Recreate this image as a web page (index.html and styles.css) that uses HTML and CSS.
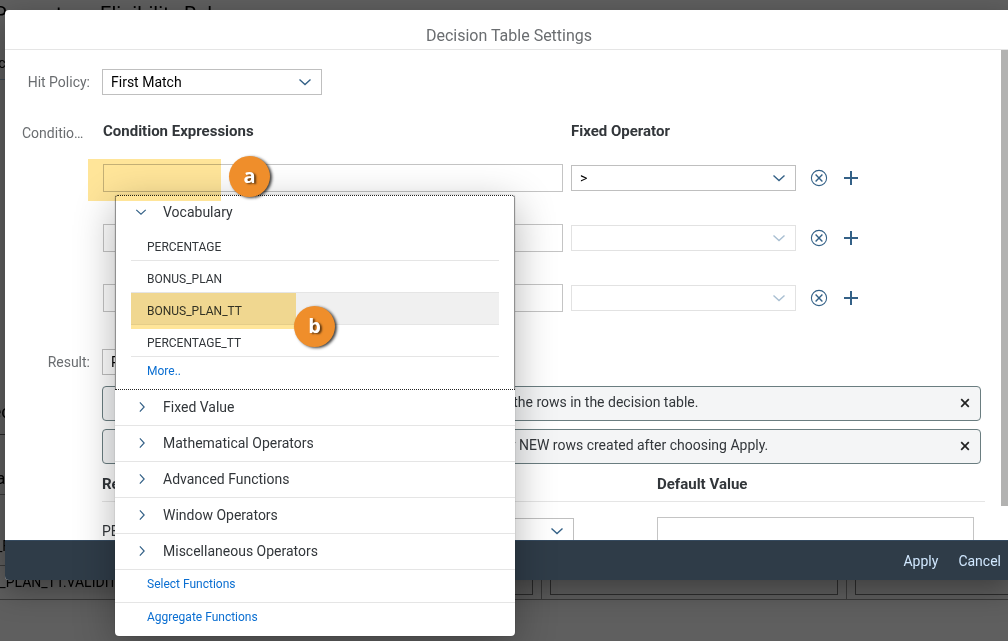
FILE: index.html
```html
<!DOCTYPE html>
<html lang="en">
<head>
<meta charset="utf-8">
<title>Decision Table Settings</title>
<link rel="stylesheet" href="styles.css">
</head>
<body>
<svg class="sprite" aria-hidden="true">
  <symbol id="chevron" viewBox="0 0 14 14"><path d="M1.5 4.5 7 9.5l5.5-5" fill="none" stroke="currentColor" stroke-width="1.4"/></symbol>
  <symbol id="decline" viewBox="0 0 18 18"><circle cx="9" cy="9" r="7.6" fill="none" stroke="currentColor" stroke-width="1.1"/><path d="m5.6 5.6 6.8 6.8m0-6.8-6.8 6.8" stroke="currentColor" stroke-width="1.4"/></symbol>
  <symbol id="add" viewBox="0 0 16 16"><path d="M8 1v14M1 8h14" stroke="currentColor" stroke-width="2"/></symbol>
  <symbol id="close" viewBox="0 0 10 10"><path d="m1.2 1.2 7.6 7.6m0-7.6-7.6 7.6" stroke="currentColor" stroke-width="1.7"/></symbol>
</svg>

<div class="page" aria-hidden="true">
  <h1 class="page-title">Percentage Eligibility Rules</h1>
  <p class="page-tab">Doc</p>
  <h2 class="page-section">Decision</h2>
  <p class="page-label">Data</p>
  <p class="page-head">N_FILTER</p>
  <div class="page-row">
    <span class="page-cell">S_PLAN_TT.VALIDITY</span>
    <span class="page-cell"><i class="page-box"></i></span>
    <span class="page-cell"><i class="page-box"></i></span>
    <span class="page-cell"><i class="page-box"></i></span>
  </div>
</div>
<div class="shade"></div>

<section class="dialog" role="dialog" aria-labelledby="dialog-title">
  <header class="dialog-header"><h2 id="dialog-title">Decision Table Settings</h2></header>
  <div class="dialog-body">
    <div class="form">
      <label class="form-label" for="hit">Hit Policy:</label>
      <div class="picker picker-policy">
        <select id="hit"><option>First Match</option></select>
        <svg class="arrow"><use href="#chevron"/></svg>
      </div>

      <span class="form-label form-label-start">Condition Expressions:</span>
      <div class="conditions">
        <h3>Condition Expressions</h3>
        <h3 class="wide">Fixed Operator</h3>

        <input type="text" aria-label="Condition 1">
        <div class="picker">
          <select aria-label="Operator 1"><option>&gt;</option></select>
          <svg class="arrow"><use href="#chevron"/></svg>
        </div>
        <div class="actions">
          <button type="button" aria-label="Remove"><svg class="icon-lg"><use href="#decline"/></svg></button>
          <button type="button" aria-label="Add"><svg class="icon-md"><use href="#add"/></svg></button>
        </div>

        <input type="text" aria-label="Condition 2">
        <div class="picker off">
          <select aria-label="Operator 2" disabled><option></option></select>
          <svg class="arrow"><use href="#chevron"/></svg>
        </div>
        <div class="actions">
          <button type="button" aria-label="Remove"><svg class="icon-lg"><use href="#decline"/></svg></button>
          <button type="button" aria-label="Add"><svg class="icon-md"><use href="#add"/></svg></button>
        </div>

        <input type="text" aria-label="Condition 3">
        <div class="picker off">
          <select aria-label="Operator 3" disabled><option></option></select>
          <svg class="arrow"><use href="#chevron"/></svg>
        </div>
        <div class="actions">
          <button type="button" aria-label="Remove"><svg class="icon-lg"><use href="#decline"/></svg></button>
          <button type="button" aria-label="Add"><svg class="icon-md"><use href="#add"/></svg></button>
        </div>
      </div>

      <label class="form-label form-label-result" for="result">Result:</label>
      <div class="result">
        <div class="picker picker-policy">
          <select id="result"><option>PERCENTAGE</option></select>
          <svg class="arrow"><use href="#chevron"/></svg>
        </div>
        <div class="message">
          <p>Changes made to access of a result columns will apply to all the rows in the decision table.</p>
          <button type="button" aria-label="Close"><svg class="icon-sm"><use href="#close"/></svg></button>
        </div>
        <div class="message">
          <p>Change made to the default value of a result will apply to only NEW rows created after choosing Apply.</p>
          <button type="button" aria-label="Close"><svg class="icon-sm"><use href="#close"/></svg></button>
        </div>
        <table class="results">
          <thead><tr><th class="col-name">Result</th><th class="col-access">Access</th><th>Default Value</th></tr></thead>
          <tbody><tr>
            <td>PERCENTAGE</td>
            <td><div class="picker"><select aria-label="Access"><option>Editable</option></select><svg class="arrow"><use href="#chevron"/></svg></div></td>
            <td class="cell-value"><input type="text" aria-label="Default value"></td>
          </tr></tbody>
        </table>
      </div>
    </div>
    <div class="track"><div class="thumb"></div></div>
  </div>
  <footer class="dialog-footer">
    <button type="button">Apply</button>
    <button type="button">Cancel</button>
  </footer>
</section>

<nav class="popover" aria-label="Expression suggestions">
  <div class="group">
    <button type="button" class="entry entry-open"><svg class="caret"><use href="#chevron"/></svg>Vocabulary</button>
    <ul class="words">
      <li>PERCENTAGE</li>
      <li>BONUS_PLAN</li>
      <li class="current">BONUS_PLAN_TT</li>
      <li>PERCENTAGE_TT</li>
    </ul>
    <a class="more" href="#more">More..</a>
  </div>
  <button type="button" class="entry"><svg class="caret shut"><use href="#chevron"/></svg>Fixed Value</button>
  <button type="button" class="entry"><svg class="caret shut"><use href="#chevron"/></svg>Mathematical Operators</button>
  <button type="button" class="entry"><svg class="caret shut"><use href="#chevron"/></svg>Advanced Functions</button>
  <button type="button" class="entry"><svg class="caret shut"><use href="#chevron"/></svg>Window Operators</button>
  <button type="button" class="entry"><svg class="caret shut"><use href="#chevron"/></svg>Miscellaneous Operators</button>
  <a class="function" href="#select">Select Functions</a>
  <a class="function" href="#aggregate">Aggregate Functions</a>
</nav>

<div class="highlight highlight-a"></div>
<div class="highlight highlight-b"></div>
<span class="marker marker-a">a</span>
<span class="marker marker-b">b</span>
</body>
</html>
```
FILE: styles.css
```css
* { box-sizing: border-box; }
html, body { height: 100%; }
body {
  margin: 0;
  overflow: hidden;
  position: relative;
  background: #fafafa;
  color: #32363a;
  font: 14px/20px Roboto, "Open Sans", sans-serif;
}
h1, h2, h3, p, ul { margin: 0; padding: 0; font-weight: 400; }
ul { list-style: none; }
button, input, select { font: inherit; color: inherit; margin: 0; border-radius: 0; }
button { border: 0; padding: 0; background: none; cursor: pointer; }
a { color: #0a6ed1; text-decoration: none; }
.sprite { position: absolute; width: 0; height: 0; }

/* Page under the dialog */
.page { margin-left: -20px; overflow: hidden; color: #000; white-space: nowrap; }
.page-title { padding: 4px 0 0 14px; font-size: 20px; line-height: 20px; }
.page-tab { height: 56px; padding: 29px 0 0 1px; border-bottom: 1px solid #a9c6de; }
.page-section { height: 355px; padding: 322px 0 0 0; font-size: 18px; border-bottom: 1px solid #666; }
.page-label { height: 60px; padding: 34px 0 0 6px; font-size: 16px; border-bottom: 1px solid #999; }
.page-head { height: 71px; padding: 41px 0 0 6px; border-bottom: 1px solid #999; }
.page-row { display: grid; grid-template-columns: 257px 305px 305px 305px; height: 34px; border-bottom: 1px solid #999; }
.page-cell { padding: 5px 8px; border-right: 1px solid #999; }
.page-cell:first-child { padding: 6px 0 0 11px; }
.page-box { display: block; height: 24px; border: 1px solid #777; }
.shade { position: absolute; inset: 0; background: rgba(0, 0, 0, .62); }

/* Dialog */
.dialog {
  position: absolute;
  inset: 10px -5px 61px 5px;
  display: flex;
  flex-direction: column;
  overflow: hidden;
  background: #fff;
  border-radius: 4px;
  box-shadow: 0 10px 30px rgba(0, 0, 0, .35);
}
.dialog-header { height: 40px; border-bottom: 1px solid #e5e5e5; text-align: center; }
.dialog-header h2 { font-size: 16px; line-height: 52px; color: #6a6d70; }
.dialog-body { flex: 1; min-height: 0; display: flex; overflow: hidden; }
.track { flex: 0 0 12px; }
.thumb { height: 93%; background: #b2b2b1; }
.dialog-footer {
  height: 40px;
  display: flex;
  align-items: center;
  justify-content: flex-end;
  gap: 20px;
  padding-right: 12px;
  background: #2f3c48;
  border-top: 1px solid #354a5f;
  color: #d1e8ff;
}

/* Form */
.form {
  flex: 1;
  min-width: 0;
  display: grid;
  grid-template-columns: 68px minmax(0, 1fr);
  column-gap: 12px;
  align-content: start;
  padding: 19px 16px 0 17px;
}
.form-label {
  height: 26px;
  line-height: 26px;
  text-align: right;
  white-space: nowrap;
  color: #6a6d70;
}
.form-label-start { margin-top: 25px; text-align: left; overflow: hidden; text-overflow: ellipsis; }
.picker { display: grid; align-items: center; }
.picker-policy { width: 220px; }
.picker select, .picker .arrow { grid-area: 1 / 1; }
.picker select {
  appearance: none;
  width: 100%;
  height: 26px;
  padding: 0 8px;
  border: 1px solid #bfbfbf;
  background: #fff;
  color: #000;
  opacity: 1;
}
.arrow { width: 14px; height: 14px; margin-right: 10px; justify-self: end; color: #346187; pointer-events: none; }
.off select { border-color: #e2e2e2; }
.off .arrow { color: #a9bfd2; }
input {
  width: 100%;
  height: 28px;
  padding: 0 8px;
  border: 1px solid #c4c4c4;
  background: #fff;
}

.conditions {
  display: grid;
  grid-template-columns: minmax(0, 460fr) minmax(0, 225fr) minmax(0, 182fr);
  column-gap: 8px;
  row-gap: 32px;
  align-items: center;
  margin: 26px -1px 0 1px;
}
.conditions h3 { height: 20px; margin-bottom: -9px; font-size: 15px; font-weight: 700; }
.conditions .wide { grid-column: span 2; }
.actions { display: flex; gap: 2px; }
.actions button { width: 30px; height: 26px; display: grid; place-items: center; color: #346187; }
.icon-lg { width: 18px; height: 18px; }
.icon-md { width: 16px; height: 16px; }
.icon-sm { width: 10px; height: 10px; display: block; }

.form-label-result, .result { margin-top: 37px; }
.result .picker-policy { margin-bottom: 11px; }
.message {
  display: flex;
  align-items: center;
  justify-content: space-between;
  height: 35px;
  margin: 0 4px 8px 0;
  padding: 0 10px 2px 32px;
  border: 1px solid #6a7d80;
  border-radius: 4px;
  background: #f4f5f6;
  white-space: nowrap;
}
.message p { padding-bottom: 2px; }
.message button { color: #222; }
.results { width: 100%; margin-top: -2px; border-collapse: collapse; table-layout: fixed; }
.results th { height: 31px; padding: 0 0 3px; text-align: left; font-size: 15px; font-weight: 700; border-bottom: 1px solid #e5e5e5; }
.results td { height: 60px; padding: 0; }
.results .picker { width: 272px; }
.col-name { width: 200px; }
.col-access { width: 355px; }
.results .cell-value { padding-right: 11px; }

/* Suggestion popover */
.popover {
  position: absolute;
  top: 195px;
  left: 115px;
  width: 400px;
  background: #fff;
  border-radius: 4px;
  box-shadow: 0 0 1px rgba(0, 0, 0, .5), 0 10px 40px rgba(0, 0, 0, .3);
}
.group { height: 195px; padding: 0 15px; border: 1px dotted #222; border-radius: 3px 3px 0 0; }
.entry {
  display: flex;
  align-items: center;
  gap: 15px;
  width: 100%;
  height: 36px;
  padding: 0 21px 1px;
  border-bottom: 1px solid #e5e5e5;
}
.entry-open { height: 33px; padding: 0 4px 2px; border: 0; gap: 16px; }
.caret { width: 12px; height: 12px; color: #346187; }
.shut { transform: rotate(-90deg); }
.words { font-size: 12px; }
.words li { height: 32px; padding: 3px 16px 0; line-height: 30px; border-bottom: 1px solid #e5e5e5; }
.words .current { background: #f0f0f0; }
.more { display: block; padding: 4px 16px; font-size: 12px; }
.function { display: block; height: 32px; padding: 0 32px; font-size: 12px; line-height: 28px; }
.function + .function { height: 34px; border-top: 1px solid #e5e5e5; }

/* Callouts */
.highlight { position: absolute; background: #ffe599; mix-blend-mode: multiply; }
.highlight-a { left: 88px; top: 159px; width: 133px; height: 42px; }
.highlight-b { left: 131px; top: 293px; width: 165px; height: 36px; }
.marker {
  position: absolute;
  width: 41px;
  height: 41px;
  border-radius: 50%;
  background: #ef8e2b;
  box-shadow: 2px 1px 3px rgba(0, 0, 0, .75);
  color: #fff;
  font: 700 20px/40px "Open Sans", sans-serif;
  text-align: center;
  text-shadow: 2px 1px 2px rgba(0, 0, 0, .6);
}
.marker-a { left: 229px; top: 156px; }
.marker-b { left: 294px; top: 306px; }
```
